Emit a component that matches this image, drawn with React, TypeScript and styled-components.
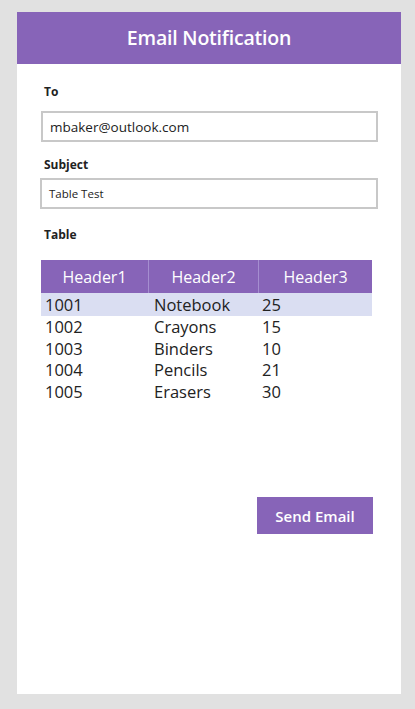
import React from "react";
import styled, { createGlobalStyle } from "styled-components";

const Global = createGlobalStyle`
  html, body { margin: 0; padding: 0; background: #e1e1e1; }
  body { font-family: "Open Sans", "Noto Sans", sans-serif; }
`;

const Screen = styled.div`
  width: 415px;
  height: 709px;
  padding: 12px 14px 15px 17px;
  box-sizing: border-box;
  display: flex;
`;

const Card = styled.div`
  flex: 1;
  background: #ffffff;
  display: flex;
  flex-direction: column;
`;

const TitleBar = styled.header`
  height: 52px;
  background: #8764b8;
  color: #ffffff;
  display: flex;
  align-items: center;
  justify-content: center;
  padding-bottom: 1px;
  box-sizing: border-box;
  font-size: 19.5px;
  font-weight: 600;
  letter-spacing: -0.2px;
`;

const Body = styled.div`
  display: flex;
  flex-direction: column;
  padding: 0 23px 0 23px;
`;

const Label = styled.div<{ $top: number }>`
  margin-top: ${(p) => p.$top}px;
  padding-left: 4px;
  font-size: 12px;
  font-weight: 700;
  color: #222222;
  height: 18px;
  line-height: 18px;
`;

const Field = styled.div<{ $size: number; $shift: number; $gap: number }>`
  margin-top: ${(p) => p.$gap}px;
  margin-left: ${(p) => p.$shift}px;
  height: 31px;
  border: 2px solid #c8c8c8;
  box-sizing: border-box;
  display: flex;
  align-items: center;
  padding-left: 7px;
  font-size: ${(p) => p.$size}px;
  color: #222222;
`;

const Table = styled.div`
  margin-top: 16px;
  width: 331px;
  margin-left: 1px;
  display: flex;
  flex-direction: column;
`;

const HeadRow = styled.div`
  display: grid;
  grid-template-columns: 108px 110px 113px;
  height: 33px;
  background: #8764b8;
`;

const HeadCell = styled.div<{ $last?: boolean }>`
  display: flex;
  align-items: center;
  justify-content: center;
  color: #ffffff;
  font-size: 16px;
  border-right: ${(p) => (p.$last ? "none" : "1px solid #a58ed0")};
`;

const Row = styled.div<{ $hl?: boolean }>`
  display: grid;
  grid-template-columns: 109px 108px 114px;
  height: ${(p) => (p.$hl ? "23px" : "21.6px")};
  align-items: center;
  background: ${(p) => (p.$hl ? "#dadef2" : "transparent")};
  font-size: 16.5px;
  color: #222222;
`;

const Cell = styled.div`
  padding-left: 4px;
  line-height: 21px;
`;

const Actions = styled.div`
  display: flex;
  justify-content: flex-end;
  margin-top: 95px;
  padding-right: 5px;
`;

const SendButton = styled.button`
  width: 116px;
  height: 37px;
  background: #8764b8;
  color: #ffffff;
  border: none;
  font-family: inherit;
  font-size: 15px;
  font-weight: 600;
  cursor: pointer;
`;

const rows = [
  ["1001", "Notebook", "25"],
  ["1002", "Crayons", "15"],
  ["1003", "Binders", "10"],
  ["1004", "Pencils", "21"],
  ["1005", "Erasers", "30"],
];

export default function App() {
  return (
    <>
      <Global />
      <Screen>
        <Card>
          <TitleBar>Email Notification</TitleBar>
          <Body>
            <Label $top={19}>To</Label>
            <Field $size={13.5} $shift={1} $gap={10}>
              mbaker@outlook.com
            </Field>
            <Label $top={14}>Subject</Label>
            <Field $size={11.5} $shift={0} $gap={4}>
              Table Test
            </Field>
            <Label $top={17}>Table</Label>
            <Table>
              <HeadRow>
                <HeadCell>Header1</HeadCell>
                <HeadCell>Header2</HeadCell>
                <HeadCell $last>Header3</HeadCell>
              </HeadRow>
              {rows.map((r, i) => (
                <Row key={r[0]} $hl={i === 0}>
                  {r.map((c) => (
                    <Cell key={c}>{c}</Cell>
                  ))}
                </Row>
              ))}
            </Table>
            <Actions>
              <SendButton>Send Email</SendButton>
            </Actions>
          </Body>
        </Card>
      </Screen>
    </>
  );
}
